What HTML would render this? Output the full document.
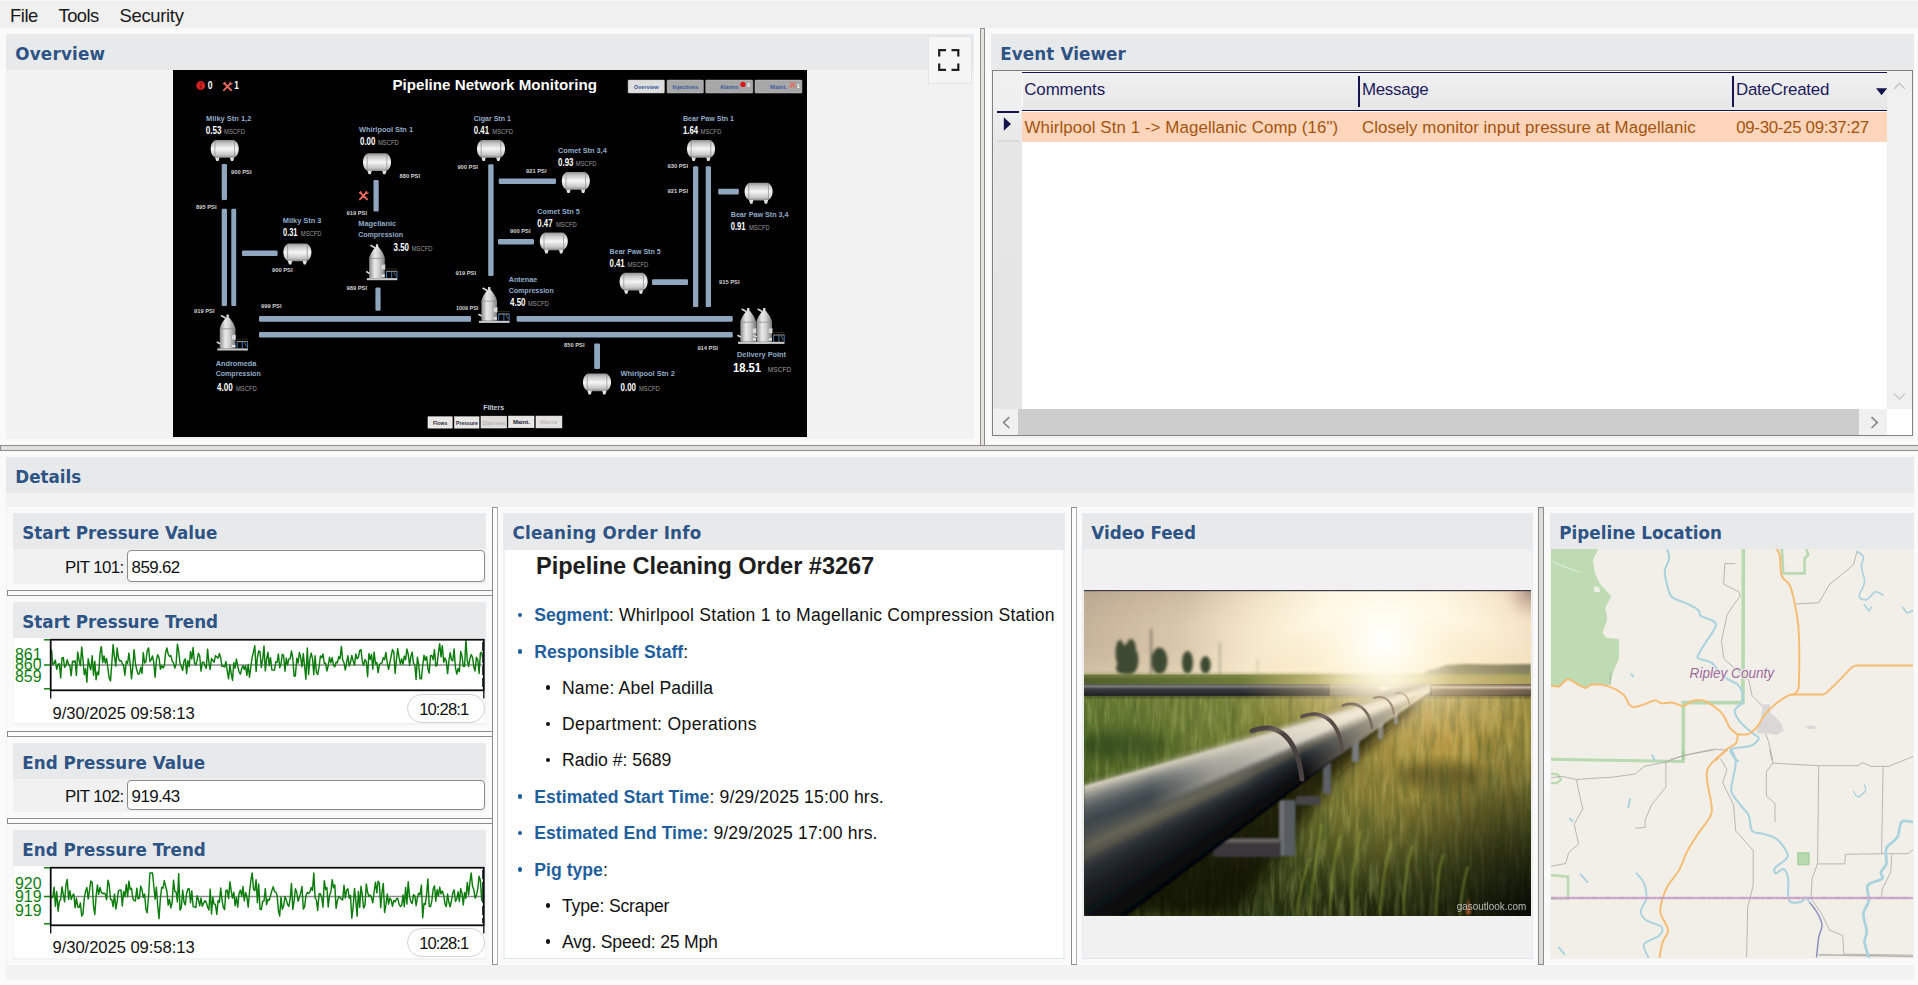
<!DOCTYPE html><html><head><meta charset='utf-8'><title>Pipeline Monitoring</title><style>
*{box-sizing:border-box;margin:0;padding:0}
html,body{width:1918px;height:985px;overflow:hidden;background:#fafafa}
body{position:relative;font-family:"Liberation Sans",sans-serif;color:#111;font-size:17px}
.abs{position:absolute}
.t{position:absolute;white-space:pre;line-height:1;transform-origin:0 0}
.hd{position:absolute;background:#e8e9eb}
.hd b,.ttl{position:absolute;white-space:pre;font-family:"DejaVu Sans","Liberation Sans",sans-serif;font-weight:bold;font-size:16.75px;color:#2d5485;line-height:1;letter-spacing:0}
.pb{position:absolute;background:#f2f2f2}
.vs{position:absolute;border-left:1px solid #8c8c8c;border-right:1px solid #8c8c8c;border-top:1px solid #8c8c8c}
.hs{position:absolute;border-top:1px solid #8c8c8c;border-bottom:1px solid #8c8c8c;border-left:1px solid #8c8c8c}
.inp{position:absolute;background:#fff;border:1px solid #8a8a8a;border-radius:4px}
.menu span{position:absolute;white-space:pre;font-size:18.2px;line-height:1;color:#1a1a1a}
.ui{font-size:16.9px;color:#111}
.doc{font-size:17.6px;color:#111}
.doc b{color:#1f5f9e;letter-spacing:0.02px}
</style></head><body>
<div class='abs' style='left:0;top:0;width:1918px;height:28px;background:#f0f0f0;border-top:1px solid #f8f8f8'></div>
<nav>
<span class='t ' style='left:10.00px;top:7.42px;font-size:18.4px;color:#1a1a1a;letter-spacing:-0.45px'>File</span>
<span class='t ' style='left:58.50px;top:7.42px;font-size:18.4px;color:#1a1a1a;letter-spacing:-0.55px'>Tools</span>
<span class='t ' style='left:119.50px;top:7.42px;font-size:18.4px;color:#1a1a1a;letter-spacing:-0.3px'>Security</span>
</nav>
<section>
<div class='pb' style='left:6px;top:34px;width:968px;height:405px'></div>
<div class='hd' style='left:6px;top:34px;width:968px;height:36px'></div>
<span class='t ttl' style='left:15.30px;top:46.23px;font-size:16.75px;letter-spacing:0.2px'>Overview</span>
<div class='abs' style='left:928px;top:36px;width:44px;height:48px;background:#f5f5f5;border:1px solid #e3e3e3'></div>
<svg class='abs' style='left:936px;top:47px' width='26' height='26' viewBox='936 47 26 26'><path d='M939.2 56.5v-6.3h6.8M951.5 50.2h6.8v6.3M958.3 63.5v6.3h-6.8M946 69.8h-6.8v-6.3' fill='none' stroke='#1e1e1e' stroke-width='2.2'/></svg>
<svg class='abs' style='left:173px;top:70px' width='634' height='367' viewBox='173 70 634 367' font-family='Liberation Sans, sans-serif'>
<defs>
<linearGradient id='tg' x1='0' y1='0' x2='0' y2='1'><stop offset='0' stop-color='#8e8e8e'/><stop offset='.18' stop-color='#c4c4c4'/><stop offset='.5' stop-color='#f6f6f6'/><stop offset='.82' stop-color='#c8c8c8'/><stop offset='1' stop-color='#8a8a8a'/></linearGradient>
<linearGradient id='cg' x1='0' y1='0' x2='1' y2='0'><stop offset='0' stop-color='#8a8a8a'/><stop offset='.35' stop-color='#e9e9e9'/><stop offset='.6' stop-color='#d2d2d2'/><stop offset='1' stop-color='#7c7c7c'/></linearGradient>
<g id='tank'><path d='M5.2 0H22.8C26.2 1.2 28 4.6 28 8.9S26.2 16.6 22.8 17.8H5.2C1.8 16.6 0 13.2 0 8.9S1.8 1.2 5.2 0Z' fill='url(#tg)'/><path d='M4.2 .5V17.3M23.8 .5V17.3' stroke='#8b8b8b' stroke-width='.7' fill='none'/><path d='M4.4 17.4H8.8L7.8 21H5.6ZM19.2 17.4H23.6L22.4 21H20.2Z' fill='#e2e2e2'/></g>
<g id='comp'><rect x='0' y='33.8' width='30.5' height='2.1' fill='#c9c9c9'/><path d='M2.4 33.8V14.2C2.8 10.6 5.4 6.6 8.6 2.8H11.8C15 6.6 17.6 10.6 18 14.2V33.8Z' fill='url(#cg)'/><path d='M2.4 14.2H18' stroke='#8a8a8a' stroke-width='.7'/><rect x='9.1' y='0' width='2.3' height='3.2' fill='#e4e4e4'/><path d='M3.6 .9L8.2 3.4' stroke='#d6d6d6' stroke-width='1.7'/><path d='M-.6 27.3L2.8 29.1' stroke='#d6d6d6' stroke-width='1.7'/><rect x='14.3' y='20.3' width='4' height='4.9' fill='#d9d9d9' stroke='#9a9a9a' stroke-width='.4'/><rect x='14.8' y='30.3' width='3.2' height='2.2' fill='#e8e8e8'/><path d='M19.4 24.6H30.4' stroke='#7a6a30' stroke-width='.6' stroke-dasharray='1.6 .8'/><path d='M19.4 27H30.4' stroke='#e4e4e4' stroke-width='.7'/><path d='M19.7 27V33.8M24.9 27V33.8M30.2 27V33.8' stroke='#3f86c8' stroke-width='.9'/><path d='M27 28L29.4 32' stroke='#cfd8e2' stroke-width='.5'/></g>
<g id='wr'><path d='M1.5 1.8L8.4 8.6M8 1.6L1.2 8.6' stroke='#e8685c' stroke-width='1.9' stroke-linecap='round'/><circle cx='8.2' cy='1.6' r='1.6' fill='#e8685c'/><circle cx='9' cy='.7' r='.9' fill='#000'/><circle cx='1.6' cy='1.6' r='1.4' fill='#e8685c'/><circle cx='.8' cy='.7' r='.8' fill='#000'/></g>
<g id='wr2'><path d='M1.5 1.8L8.4 8.6M8 1.6L1.2 8.6' stroke='#e8685c' stroke-width='2.1' stroke-linecap='round'/></g>
</defs>
<rect x='173' y='70' width='634' height='367' fill='#000'/>
<rect x='221.7' y='164' width='5.3' height='36.0' rx='1.3' fill='#8ea7bf'/>
<rect x='221.7' y='208.7' width='5.3' height='97.3' rx='1.3' fill='#8ea7bf'/>
<rect x='231.3' y='208.7' width='4.9' height='97.3' rx='1.3' fill='#8ea7bf'/>
<rect x='242' y='250.5' width='35.6' height='5.5' rx='1.3' fill='#8ea7bf'/>
<rect x='373.5' y='180' width='5.2' height='31.6' rx='1.3' fill='#8ea7bf'/>
<rect x='375.4' y='287.6' width='5.2' height='23.2' rx='1.3' fill='#8ea7bf'/>
<rect x='488.2' y='164.3' width='5.4' height='111.7' rx='1.3' fill='#8ea7bf'/>
<rect x='498.7' y='178.4' width='57.3' height='5.6' rx='1.3' fill='#8ea7bf'/>
<rect x='498' y='239' width='36.0' height='5.4' rx='1.3' fill='#8ea7bf'/>
<rect x='693' y='166.3' width='5.3' height='140.7' rx='1.3' fill='#8ea7bf'/>
<rect x='705.7' y='166.3' width='5.3' height='140.7' rx='1.3' fill='#8ea7bf'/>
<rect x='718.2' y='188.8' width='20.6' height='5.8' rx='1.3' fill='#8ea7bf'/>
<rect x='652' y='279.3' width='36.0' height='5.7' rx='1.3' fill='#8ea7bf'/>
<rect x='259' y='316' width='212.0' height='5.8' rx='1.3' fill='#8ea7bf'/>
<rect x='516.6' y='316' width='216.1' height='5.8' rx='1.3' fill='#8ea7bf'/>
<rect x='259' y='332' width='473.7' height='5.5' rx='1.3' fill='#8ea7bf'/>
<rect x='594.2' y='343.5' width='5.8' height='25.5' rx='1.3' fill='#8ea7bf'/>
<use href='#tank' x='210.7' y='140'/>
<use href='#tank' x='363' y='153.3'/>
<use href='#tank' x='477' y='140'/>
<use href='#tank' x='561.8' y='172'/>
<use href='#tank' x='687' y='140'/>
<use href='#tank' x='283.4' y='243.4'/>
<use href='#tank' x='539.8' y='232.4'/>
<use href='#tank' x='744.6' y='182.7'/>
<use href='#tank' x='619.6' y='272.8'/>
<use href='#tank' x='583' y='373.4'/>
<use href='#comp' x='366.8' y='244.3'/>
<use href='#comp' x='217.4' y='314.6'/>
<use href='#comp' x='479' y='287'/>
<use href='#comp' x='738' y='308'/>
<use href='#comp' x='754' y='308'/>
<circle cx='200.7' cy='85.6' r='4.5' fill='#cb2222'/><rect x='200.1' y='84.8' width='1.3' height='3.7' fill='#8e1010'/><rect x='200.1' y='82.6' width='1.3' height='1.3' fill='#8e1010'/>
<text x='207.7' y='89.2' font-size='10.6' font-weight='bold' fill='#fff' textLength='4.8' lengthAdjust='spacingAndGlyphs'>0</text>
<use href='#wr' x='222.8' y='81.6'/>
<text x='234.2' y='89.2' font-size='10.6' font-weight='bold' fill='#fff' textLength='4.6' lengthAdjust='spacingAndGlyphs'>1</text>
<text x='392.4' y='90.1' font-size='14.8' font-weight='bold' fill='#fff' textLength='204.6' lengthAdjust='spacingAndGlyphs'>Pipeline Network Monitoring</text>
<rect x='628.1' y='80.1' width='36.3' height='12.9' rx='.8' fill='#dedede' stroke='#c9c9c9' stroke-width='.5'/>
<text x='633.9' y='89' font-size='6.2' font-weight='bold' fill='#3b5a9d' textLength='24.8' lengthAdjust='spacingAndGlyphs'>Overview</text>
<rect x='667.1' y='80.1' width='36.3' height='12.9' rx='.8' fill='#a9a9a9' stroke='#c9c9c9' stroke-width='.5'/>
<text x='672.5' y='89' font-size='6.2' font-weight='bold' fill='#3b5a9d' textLength='25.8' lengthAdjust='spacingAndGlyphs'>Injections</text>
<rect x='705.7' y='80.1' width='47.1' height='12.9' rx='.8' fill='#a7a7a7' stroke='#c9c9c9' stroke-width='.5'/>
<text x='720.1' y='89' font-size='6.2' font-weight='bold' fill='#3b5a9d' textLength='18.3' lengthAdjust='spacingAndGlyphs'>Alarms</text>
<rect x='755' y='80.1' width='46.9' height='12.9' rx='.8' fill='#a7a7a7' stroke='#c9c9c9' stroke-width='.5'/>
<text x='770.1' y='89' font-size='6.2' font-weight='bold' fill='#3b5a9d' textLength='16.9' lengthAdjust='spacingAndGlyphs'>Maint.</text>
<circle cx='743' cy='84.4' r='2.6' fill='#e01515'/><text x='747' y='86.5' font-size='5.5' fill='#fff' font-weight='bold'>0</text>
<use href='#wr2' transform='translate(789.5 81.6) scale(.66)'/><text x='796.8' y='87.5' font-size='5.5' fill='#fff' font-weight='bold'>1</text>
<text x='206' y='121' font-size='8' font-weight='bold' fill='#93acc8' textLength='45.3' lengthAdjust='spacingAndGlyphs'>Milky Stn 1,2</text>
<text x='359' y='132' font-size='8' font-weight='bold' fill='#93acc8' textLength='54' lengthAdjust='spacingAndGlyphs'>Whirlpool Stn 1</text>
<text x='473.8' y='121' font-size='8' font-weight='bold' fill='#93acc8' textLength='37' lengthAdjust='spacingAndGlyphs'>Cigar Stn 1</text>
<text x='558' y='152.8' font-size='8' font-weight='bold' fill='#93acc8' textLength='48.7' lengthAdjust='spacingAndGlyphs'>Comet Stn 3,4</text>
<text x='683' y='121' font-size='8' font-weight='bold' fill='#93acc8' textLength='51' lengthAdjust='spacingAndGlyphs'>Bear Paw Stn 1</text>
<text x='282.8' y='223' font-size='8' font-weight='bold' fill='#93acc8' textLength='38.6' lengthAdjust='spacingAndGlyphs'>Milky Stn 3</text>
<text x='358.2' y='225.7' font-size='8' font-weight='bold' fill='#93acc8' textLength='38' lengthAdjust='spacingAndGlyphs'>Magellanic</text>
<text x='358.2' y='236.7' font-size='8' font-weight='bold' fill='#93acc8' textLength='44.8' lengthAdjust='spacingAndGlyphs'>Compression</text>
<text x='537.3' y='214' font-size='8' font-weight='bold' fill='#93acc8' textLength='42.4' lengthAdjust='spacingAndGlyphs'>Comet Stn 5</text>
<text x='730.7' y='216.8' font-size='8' font-weight='bold' fill='#93acc8' textLength='57.9' lengthAdjust='spacingAndGlyphs'>Bear Paw Stn 3,4</text>
<text x='609.6' y='254' font-size='8' font-weight='bold' fill='#93acc8' textLength='51.1' lengthAdjust='spacingAndGlyphs'>Bear Paw Stn 5</text>
<text x='508.7' y='281.8' font-size='8' font-weight='bold' fill='#93acc8' textLength='28.6' lengthAdjust='spacingAndGlyphs'>Antenae</text>
<text x='508.7' y='292.8' font-size='8' font-weight='bold' fill='#93acc8' textLength='45' lengthAdjust='spacingAndGlyphs'>Compression</text>
<text x='215.7' y='366' font-size='8' font-weight='bold' fill='#93acc8' textLength='40.7' lengthAdjust='spacingAndGlyphs'>Andromeda</text>
<text x='215.7' y='376.3' font-size='8' font-weight='bold' fill='#93acc8' textLength='45' lengthAdjust='spacingAndGlyphs'>Compression</text>
<text x='620.6' y='375.8' font-size='8' font-weight='bold' fill='#93acc8' textLength='54.2' lengthAdjust='spacingAndGlyphs'>Whirlpool Stn 2</text>
<text x='737' y='357' font-size='8' font-weight='bold' fill='#93acc8' textLength='49' lengthAdjust='spacingAndGlyphs'>Delivery Point</text>
<text x='483.2' y='409.9' font-size='8' font-weight='bold' fill='#c3d0de' textLength='20.8' lengthAdjust='spacingAndGlyphs'>Filters</text>
<text x='205.8' y='134' font-size='10' font-weight='bold' fill='#fff' textLength='15.8' lengthAdjust='spacingAndGlyphs'>0.53</text>
<text x='360' y='145' font-size='10' font-weight='bold' fill='#fff' textLength='15.4' lengthAdjust='spacingAndGlyphs'>0.00</text>
<text x='473.8' y='134' font-size='10' font-weight='bold' fill='#fff' textLength='15.2' lengthAdjust='spacingAndGlyphs'>0.41</text>
<text x='558' y='166' font-size='10' font-weight='bold' fill='#fff' textLength='15.5' lengthAdjust='spacingAndGlyphs'>0.93</text>
<text x='683' y='134' font-size='10' font-weight='bold' fill='#fff' textLength='15' lengthAdjust='spacingAndGlyphs'>1.64</text>
<text x='283' y='236.3' font-size='10' font-weight='bold' fill='#fff' textLength='14.5' lengthAdjust='spacingAndGlyphs'>0.31</text>
<text x='393.6' y='250.7' font-size='10' font-weight='bold' fill='#fff' textLength='15.4' lengthAdjust='spacingAndGlyphs'>3.50</text>
<text x='537.3' y='227' font-size='10' font-weight='bold' fill='#fff' textLength='15.2' lengthAdjust='spacingAndGlyphs'>0.47</text>
<text x='730.7' y='230' font-size='10' font-weight='bold' fill='#fff' textLength='14.8' lengthAdjust='spacingAndGlyphs'>0.91</text>
<text x='609.6' y='267' font-size='10' font-weight='bold' fill='#fff' textLength='15' lengthAdjust='spacingAndGlyphs'>0.41</text>
<text x='510' y='306' font-size='10' font-weight='bold' fill='#fff' textLength='15.5' lengthAdjust='spacingAndGlyphs'>4.50</text>
<text x='217' y='390.9' font-size='10' font-weight='bold' fill='#fff' textLength='15.7' lengthAdjust='spacingAndGlyphs'>4.00</text>
<text x='620.6' y='390.9' font-size='10' font-weight='bold' fill='#fff' textLength='15.4' lengthAdjust='spacingAndGlyphs'>0.00</text>
<text x='733' y='372' font-size='12.8' font-weight='bold' fill='#fff' textLength='28' lengthAdjust='spacingAndGlyphs'>18.51</text>
<text x='224.1' y='134' font-size='6.8' fill='#9b9b9b' textLength='20.8' lengthAdjust='spacingAndGlyphs'>MSCFD</text>
<text x='378' y='145' font-size='6.8' fill='#9b9b9b' textLength='20.8' lengthAdjust='spacingAndGlyphs'>MSCFD</text>
<text x='492.3' y='134' font-size='6.8' fill='#9b9b9b' textLength='20.8' lengthAdjust='spacingAndGlyphs'>MSCFD</text>
<text x='575.8' y='166' font-size='6.8' fill='#9b9b9b' textLength='20.8' lengthAdjust='spacingAndGlyphs'>MSCFD</text>
<text x='700.6' y='134' font-size='6.8' fill='#9b9b9b' textLength='20.8' lengthAdjust='spacingAndGlyphs'>MSCFD</text>
<text x='300.8' y='236.3' font-size='6.8' fill='#9b9b9b' textLength='20.8' lengthAdjust='spacingAndGlyphs'>MSCFD</text>
<text x='411.7' y='250.7' font-size='6.8' fill='#9b9b9b' textLength='20.8' lengthAdjust='spacingAndGlyphs'>MSCFD</text>
<text x='556' y='227' font-size='6.8' fill='#9b9b9b' textLength='20.8' lengthAdjust='spacingAndGlyphs'>MSCFD</text>
<text x='748.9' y='230' font-size='6.8' fill='#9b9b9b' textLength='20.8' lengthAdjust='spacingAndGlyphs'>MSCFD</text>
<text x='627.5' y='267' font-size='6.8' fill='#9b9b9b' textLength='20.8' lengthAdjust='spacingAndGlyphs'>MSCFD</text>
<text x='528' y='306' font-size='6.8' fill='#9b9b9b' textLength='20.8' lengthAdjust='spacingAndGlyphs'>MSCFD</text>
<text x='236' y='390.9' font-size='6.8' fill='#9b9b9b' textLength='20.8' lengthAdjust='spacingAndGlyphs'>MSCFD</text>
<text x='639' y='390.9' font-size='6.8' fill='#9b9b9b' textLength='20.8' lengthAdjust='spacingAndGlyphs'>MSCFD</text>
<text x='767.8' y='372' font-size='8' fill='#9b9b9b' textLength='23.5' lengthAdjust='spacingAndGlyphs'>MSCFD</text>
<text x='231' y='173.9' font-size='5.3' font-weight='bold' fill='#d4d4d4' textLength='20.5' lengthAdjust='spacingAndGlyphs'>900 PSI</text>
<text x='196' y='208.9' font-size='5.3' font-weight='bold' fill='#d4d4d4' textLength='20.5' lengthAdjust='spacingAndGlyphs'>895 PSI</text>
<text x='399.5' y='177.9' font-size='5.3' font-weight='bold' fill='#d4d4d4' textLength='20.5' lengthAdjust='spacingAndGlyphs'>880 PSI</text>
<text x='346.5' y='214.9' font-size='5.3' font-weight='bold' fill='#d4d4d4' textLength='20.5' lengthAdjust='spacingAndGlyphs'>919 PSI</text>
<text x='457.4' y='168.9' font-size='5.3' font-weight='bold' fill='#d4d4d4' textLength='20.5' lengthAdjust='spacingAndGlyphs'>900 PSI</text>
<text x='526' y='172.9' font-size='5.3' font-weight='bold' fill='#d4d4d4' textLength='20.5' lengthAdjust='spacingAndGlyphs'>921 PSI</text>
<text x='510' y='232.9' font-size='5.3' font-weight='bold' fill='#d4d4d4' textLength='20.5' lengthAdjust='spacingAndGlyphs'>900 PSI</text>
<text x='667.5' y='168.2' font-size='5.3' font-weight='bold' fill='#d4d4d4' textLength='20.5' lengthAdjust='spacingAndGlyphs'>930 PSI</text>
<text x='667.5' y='192.9' font-size='5.3' font-weight='bold' fill='#d4d4d4' textLength='20.5' lengthAdjust='spacingAndGlyphs'>921 PSI</text>
<text x='272' y='271.9' font-size='5.3' font-weight='bold' fill='#d4d4d4' textLength='20.5' lengthAdjust='spacingAndGlyphs'>900 PSI</text>
<text x='346.5' y='289.9' font-size='5.3' font-weight='bold' fill='#d4d4d4' textLength='20.5' lengthAdjust='spacingAndGlyphs'>989 PSI</text>
<text x='194' y='312.9' font-size='5.3' font-weight='bold' fill='#d4d4d4' textLength='20.5' lengthAdjust='spacingAndGlyphs'>919 PSI</text>
<text x='261' y='307.9' font-size='5.3' font-weight='bold' fill='#d4d4d4' textLength='20.5' lengthAdjust='spacingAndGlyphs'>999 PSI</text>
<text x='455.5' y='274.9' font-size='5.3' font-weight='bold' fill='#d4d4d4' textLength='20.5' lengthAdjust='spacingAndGlyphs'>919 PSI</text>
<text x='456' y='309.9' font-size='5.3' font-weight='bold' fill='#d4d4d4' textLength='22.3' lengthAdjust='spacingAndGlyphs'>1009 PSI</text>
<text x='719' y='283.7' font-size='5.3' font-weight='bold' fill='#d4d4d4' textLength='20.5' lengthAdjust='spacingAndGlyphs'>915 PSI</text>
<text x='564' y='346.9' font-size='5.3' font-weight='bold' fill='#d4d4d4' textLength='20.5' lengthAdjust='spacingAndGlyphs'>850 PSI</text>
<text x='697.4' y='350.3' font-size='5.3' font-weight='bold' fill='#d4d4d4' textLength='20.5' lengthAdjust='spacingAndGlyphs'>914 PSI</text>
<use href='#wr' x='358.7' y='190.8'/>
<rect x='428' y='416.8' width='24.2' height='11.3' fill='#e9e7e3' stroke='#fafafa' stroke-width='.6'/>
<text x='432.9' y='425.1' font-size='6' font-weight='bold' fill='#2a2a33' textLength='14.5' lengthAdjust='spacingAndGlyphs'>Flows</text>
<rect x='454.6' y='416.8' width='24.4' height='11.3' fill='#e9e7e3' stroke='#fafafa' stroke-width='.6'/>
<text x='456' y='425.1' font-size='6' font-weight='bold' fill='#2a2a44' textLength='21.9' lengthAdjust='spacingAndGlyphs'>Pressure</text>
<rect x='481' y='416.2' width='25.6' height='11.8' fill='#dcdad6' stroke='#fafafa' stroke-width='.6'/>
<text x='482.2' y='425.1' font-size='6' font-weight='normal' fill='#aaa9b0' textLength='23.4' lengthAdjust='spacingAndGlyphs'>Diameter</text>
<rect x='508.6' y='416.1' width='25.4' height='11.6' fill='#e9e7e3' stroke='#fafafa' stroke-width='.6'/>
<text x='512.9' y='424' font-size='6' font-weight='bold' fill='#1e2238' textLength='17' lengthAdjust='spacingAndGlyphs'>Maint.</text>
<rect x='536' y='416.1' width='25.9' height='11.8' fill='#e4e2de' stroke='#fafafa' stroke-width='.6'/>
<text x='540' y='424.2' font-size='6' font-weight='normal' fill='#a9a8ae' textLength='17.6' lengthAdjust='spacingAndGlyphs'>Alarms</text>
</svg>
</section>
<div class='vs' style='left:980px;top:28px;width:5px;height:417px;background:#e6e4df'></div>
<section>
<div class='pb' style='left:991px;top:34px;width:923px;height:405px'></div>
<div class='hd' style='left:991px;top:34px;width:923px;height:36px'></div>
<span class='t ttl' style='left:1000.30px;top:46.23px;font-size:16.75px;letter-spacing:0.1px'>Event Viewer</span>
<div class='abs' style='left:992px;top:70px;width:921px;height:366px;background:#fff;border:1px solid #828282'></div>
<div class='abs' style='left:993px;top:71px;width:29px;height:338px;background:linear-gradient(#f0f0f0 0,#efefef 40px,#e6e6e6 75px,#e5e5e5 100%)'></div>
<div class='abs' style='left:1022px;top:72px;width:865px;height:39px;background:linear-gradient(#f1f1f1,#e6e6e6);border-top:1.5px solid #14144f;border-bottom:1.5px solid #14144f'></div>
<div class='abs' style='left:1022px;top:76px;width:1px;height:31px;background:#fbfbfb'></div>
<div class='abs' style='left:1358px;top:76px;width:2px;height:31px;background:#14144f'></div>
<div class='abs' style='left:1732px;top:76px;width:1.5px;height:31px;background:#14144f'></div>
<span class='t ' style='left:1024.30px;top:82.29px;font-size:16.9px;color:#1b1b5c;letter-spacing:-0.12px'>Comments</span>
<span class='t ' style='left:1362.00px;top:82.29px;font-size:16.9px;color:#1b1b5c;letter-spacing:-0.3px'>Message</span>
<span class='t ' style='left:1736.00px;top:82.29px;font-size:16.9px;color:#1b1b5c;letter-spacing:-0.24px'>DateCreated</span>
<svg class='abs' style='left:1874px;top:86px' width='14' height='12' viewBox='1874 86 14 12'><path d='M1876 88.3h11.2l-5.6 6.9z' fill='#14144f'/></svg>
<div class='abs' style='left:1022px;top:111.5px;width:865px;height:30.5px;background:#fdd5ba'></div>
<span class='t ' style='left:1024.40px;top:120.39px;font-size:16.9px;color:#a4540f;letter-spacing:0.08px'>Whirlpool Stn 1 -&gt; Magellanic Comp (16")</span>
<span class='t ' style='left:1362.00px;top:120.39px;font-size:16.9px;color:#a4540f;letter-spacing:0.03px'>Closely monitor input pressure at Magellanic</span>
<span class='t ' style='left:1736.20px;top:120.39px;font-size:16.9px;color:#a4540f;letter-spacing:-0.32px'>09-30-25 09:37:27</span>
<div class='abs' style='left:997px;top:110.5px;width:22px;height:2.5px;background:#14144f'></div>
<div class='abs' style='left:997px;top:140px;width:22px;height:1.8px;background:#d9d9d9'></div>
<svg class='abs' style='left:1002px;top:116px' width='12' height='16' viewBox='1002 116 12 16'><path d='M1003.8 117.3v13.4l7.2-6.7z' fill='#14144f'/></svg>
<div class='abs' style='left:1887px;top:71px;width:25px;height:338px;background:#f0f0f0'></div>
<svg class='abs' style='left:1887px;top:71px' width='25' height='338' viewBox='1887 71 25 338'><path d='M1894 89l5.5-5.5 5.5 5.5' fill='none' stroke='#c9c9c9' stroke-width='1.6'/><path d='M1894 393.5l5.5 5.5 5.5-5.5' fill='none' stroke='#cfcfcf' stroke-width='1.6'/></svg>
<div class='abs' style='left:993px;top:409px;width:894px;height:26px;background:#f0f0f0'></div>
<div class='abs' style='left:1018px;top:409px;width:841px;height:26px;background:#cdcdcd'></div>
<svg class='abs' style='left:993px;top:409px' width='894' height='26' viewBox='993 409 894 26'><path d='M1009.3 417.2l-5.8 5.4 5.8 5.4' fill='none' stroke='#858585' stroke-width='1.6'/><path d='M1871.5 417.2l5.8 5.4-5.8 5.4' fill='none' stroke='#858585' stroke-width='1.6'/></svg>
</section>
<div class='hs' style='left:0;top:445px;width:1918px;height:6px;background:#e0dfdb'></div>
<section>
<div class='pb' style='left:6px;top:457px;width:1908px;height:523px'></div>
<div class='hd' style='left:6px;top:457px;width:1908px;height:36px'></div>
<span class='t ttl' style='left:15.30px;top:469.23px;font-size:16.75px;'>Details</span>
<div class='abs' style='left:7px;top:507px;width:1907px;height:458px;background:#fafafa'></div>
<div class='pb' style='left:13px;top:513px;width:473px;height:71px;background:#f1f1f1'></div>
<div class='hd' style='left:13px;top:513px;width:473px;height:36px'></div>
<span class='t ttl' style='left:22.30px;top:525.13px;font-size:16.75px;'>Start Pressure Value</span>
<span class='t ' style='left:65.00px;top:560.19px;font-size:16.9px;letter-spacing:-0.62px'>PIT 101:</span>
<div class='inp' style='left:127px;top:550px;width:358px;height:32px'></div>
<span class='t ' style='left:131.60px;top:560.19px;font-size:16.9px;letter-spacing:-0.6px'>859.62</span>
<div class='hs' style='left:7px;top:590px;width:485px;height:6px;background:#fbfbfb'></div>
<div class='pb' style='left:13px;top:602px;width:473px;height:123px'></div>
<div class='abs' style='left:14px;top:638px;width:471px;height:85px;background:#fff'></div>
<div class='hd' style='left:13px;top:602px;width:473px;height:36px'></div>
<span class='t ttl' style='left:22.30px;top:614.13px;font-size:16.75px;'>Start Pressure Trend</span>
<svg class='abs' style='left:13px;top:637px' width='475' height='88' viewBox='13 637 475 88'>
<line x1='50' x2='484.5' y1='665.0' y2='665.0' stroke='#8a8a8a' stroke-width='1.6'/>
<polyline points='51.5,649.6 52.8,664.5 54.1,663.4 55.4,660.1 56.7,669.3 58.1,664.6 59.4,663.7 60.7,677.9 62.0,657.9 63.3,657.4 64.6,667.3 65.9,665.6 67.2,659.7 68.6,664.8 69.9,665.6 71.2,675.8 72.5,661.2 73.8,661.9 75.1,660.8 76.4,675.4 77.7,652.1 79.0,659.8 80.4,665.8 81.7,647.1 83.0,660.4 84.3,674.6 85.6,668.8 86.9,682.2 88.2,658.6 89.5,665.7 90.8,669.8 92.2,655.7 93.5,675.2 94.8,661.2 96.1,679.7 97.4,671.9 98.7,674.8 100.0,653.4 101.3,646.6 102.7,662.5 104.0,656.0 105.3,663.1 106.6,658.4 107.9,668.3 109.2,678.1 110.5,680.9 111.8,663.4 113.1,644.6 114.5,657.1 115.8,666.1 117.1,647.9 118.4,658.0 119.7,661.1 121.0,660.5 122.3,663.5 123.6,665.6 124.9,675.2 126.3,661.2 127.6,663.3 128.9,653.1 130.2,664.0 131.5,678.8 132.8,666.8 134.1,649.6 135.4,663.3 136.8,670.2 138.1,674.1 139.4,673.7 140.7,667.4 142.0,673.4 143.3,652.6 144.6,663.0 145.9,661.9 147.2,650.7 148.6,647.9 149.9,661.5 151.2,659.7 152.5,656.0 153.8,662.9 155.1,677.3 156.4,660.2 157.7,654.8 159.0,657.6 160.4,669.2 161.7,665.5 163.0,668.0 164.3,666.1 165.6,652.6 166.9,648.0 168.2,654.1 169.5,656.3 170.9,655.7 172.2,661.3 173.5,662.9 174.8,668.1 176.1,664.1 177.4,644.2 178.7,651.7 180.0,663.1 181.3,666.5 182.7,670.4 184.0,660.9 185.3,658.9 186.6,673.6 187.9,660.6 189.2,666.7 190.5,651.5 191.8,658.9 193.1,647.5 194.5,663.1 195.8,664.9 197.1,660.4 198.4,653.2 199.7,655.8 201.0,671.1 202.3,662.5 203.6,662.1 205.0,665.8 206.3,668.3 207.6,649.1 208.9,662.8 210.2,669.3 211.5,658.4 212.8,660.4 214.1,662.4 215.4,655.8 216.8,656.9 218.1,658.1 219.4,653.4 220.7,658.0 222.0,666.4 223.3,665.9 224.6,667.1 225.9,661.4 227.2,670.8 228.6,678.9 229.9,664.7 231.2,673.6 232.5,680.4 233.8,662.6 235.1,668.0 236.4,659.1 237.7,665.8 239.1,672.0 240.4,674.2 241.7,668.6 243.0,665.5 244.3,669.4 245.6,665.7 246.9,675.3 248.2,664.5 249.5,677.2 250.9,666.5 252.2,657.1 253.5,651.9 254.8,645.8 256.1,671.4 257.4,657.5 258.7,651.0 260.0,651.6 261.3,667.4 262.7,659.5 264.0,646.0 265.3,670.9 266.6,659.7 267.9,652.2 269.2,665.6 270.5,657.7 271.8,669.7 273.2,670.0 274.5,670.1 275.8,661.8 277.1,662.4 278.4,654.0 279.7,667.8 281.0,664.0 282.3,654.2 283.6,655.5 285.0,671.3 286.3,658.1 287.6,664.8 288.9,659.0 290.2,658.6 291.5,650.9 292.8,658.5 294.1,676.2 295.4,675.7 296.8,658.3 298.1,663.0 299.4,652.4 300.7,657.4 302.0,666.8 303.3,653.6 304.6,666.5 305.9,679.3 307.3,648.0 308.6,674.5 309.9,658.8 311.2,653.1 312.5,658.5 313.8,674.7 315.1,655.7 316.4,672.1 317.7,674.5 319.1,666.9 320.4,656.0 321.7,657.8 323.0,653.9 324.3,663.5 325.6,663.1 326.9,671.0 328.2,665.8 329.5,657.3 330.9,662.9 332.2,657.6 333.5,665.2 334.8,666.9 336.1,662.0 337.4,662.9 338.7,656.6 340.0,658.8 341.4,646.4 342.7,660.0 344.0,662.8 345.3,670.0 346.6,662.7 347.9,655.8 349.2,666.1 350.5,662.5 351.8,655.4 353.2,661.0 354.5,665.3 355.8,653.9 357.1,658.8 358.4,657.3 359.7,650.6 361.0,649.5 362.3,661.5 363.6,665.4 365.0,659.5 366.3,661.7 367.6,676.7 368.9,653.6 370.2,659.3 371.5,654.5 372.8,669.3 374.1,652.0 375.5,663.9 376.8,662.4 378.1,672.7 379.4,664.6 380.7,663.5 382.0,662.9 383.3,657.6 384.6,659.7 385.9,652.5 387.3,663.0 388.6,669.4 389.9,662.6 391.2,656.0 392.5,649.5 393.8,651.8 395.1,673.5 396.4,660.1 397.7,648.6 399.1,657.7 400.4,664.3 401.7,658.8 403.0,664.4 404.3,656.1 405.6,659.8 406.9,649.0 408.2,654.2 409.6,665.3 410.9,656.5 412.2,652.1 413.5,663.5 414.8,664.7 416.1,679.5 417.4,657.1 418.7,664.7 420.0,678.8 421.4,678.7 422.7,666.0 424.0,655.3 425.3,660.2 426.6,656.5 427.9,668.7 429.2,673.1 430.5,655.7 431.8,655.4 433.2,659.7 434.5,649.7 435.8,666.1 437.1,665.0 438.4,652.8 439.7,643.7 441.0,656.9 442.3,645.8 443.7,662.4 445.0,658.0 446.3,661.3 447.6,673.6 448.9,660.8 450.2,652.7 451.5,660.0 452.8,660.8 454.1,648.9 455.5,668.2 456.8,674.1 458.1,668.4 459.4,671.7 460.7,651.4 462.0,655.9 463.3,666.4 464.6,666.5 465.9,640.1 467.3,660.7 468.6,666.5 469.9,658.9 471.2,654.6 472.5,657.2 473.8,667.0 475.1,671.0 476.4,657.3 477.8,659.9 479.1,673.5 480.4,653.1 481.7,652.2 483.0,660.4' fill='none' stroke='#0c7d0c' stroke-width='1.45' stroke-linejoin='round'/>
<line x1='482.9' x2='482.9' y1='642' y2='688' stroke='#2f4a4c' stroke-width='1.8' stroke-dasharray='9 3'/>
<rect x='50.7' y='639.7' width='433.1' height='50.6' fill='none' stroke='#0c0c0c' stroke-width='1.8'/>
<path d='M50.7 691v7.5M483.8 691v7.5' stroke='#0c0c0c' stroke-width='1.3'/>
<line x1='44' x2='50' y1='639.8' y2='639.8' stroke='#0f800f' stroke-width='1.5'/>
<line x1='44' x2='50' y1='665.0' y2='665.0' stroke='#0f800f' stroke-width='1.5'/>
<line x1='44' x2='50' y1='688.8' y2='688.8' stroke='#0f800f' stroke-width='1.5'/>
<text x='41.6' y='659.6' text-anchor='end' font-family='Liberation Sans, sans-serif' font-size='15.6' fill='#0f800f' textLength='26.6' lengthAdjust='spacingAndGlyphs'>861</text>
<text x='41.6' y='670.3' text-anchor='end' font-family='Liberation Sans, sans-serif' font-size='15.6' fill='#0f800f' textLength='26.6' lengthAdjust='spacingAndGlyphs'>860</text>
<text x='41.6' y='682.3' text-anchor='end' font-family='Liberation Sans, sans-serif' font-size='15.6' fill='#0f800f' textLength='26.6' lengthAdjust='spacingAndGlyphs'>859</text>
</svg>
<span class='t ' style='left:52.50px;top:705.75px;font-size:16.6px;letter-spacing:-0.05px'>9/30/2025 09:58:13</span>
<div class='abs' style='left:407px;top:693.5px;width:77.5px;height:29px;border:1px solid #d2d2d2;border-radius:15px;background:#fff'></div>
<span class='t ' style='left:419.20px;top:702.45px;font-size:16.6px;letter-spacing:-0.9px'>10:28:1</span>
<div class='hs' style='left:7px;top:731px;width:485px;height:6px;background:#fbfbfb'></div>
<div class='pb' style='left:13px;top:743px;width:473px;height:69px;background:#f1f1f1'></div>
<div class='hd' style='left:13px;top:743px;width:473px;height:36px'></div>
<span class='t ttl' style='left:22.30px;top:754.93px;font-size:16.75px;'>End Pressure Value</span>
<span class='t ' style='left:65.00px;top:789.19px;font-size:16.9px;letter-spacing:-0.62px'>PIT 102:</span>
<div class='inp' style='left:127px;top:780px;width:358px;height:30px'></div>
<span class='t ' style='left:131.60px;top:789.19px;font-size:16.9px;letter-spacing:-0.6px'>919.43</span>
<div class='hs' style='left:7px;top:818px;width:485px;height:6px;background:#fbfbfb'></div>
<div class='pb' style='left:13px;top:830px;width:473px;height:130px'></div>
<div class='abs' style='left:14px;top:866px;width:471px;height:92px;background:#fff'></div>
<div class='hd' style='left:13px;top:830px;width:473px;height:36px'></div>
<span class='t ttl' style='left:22.30px;top:841.73px;font-size:16.75px;'>End Pressure Trend</span>
<svg class='abs' style='left:13px;top:865px' width='475' height='95' viewBox='13 865 475 95'>
<line x1='50' x2='484.5' y1='896.5' y2='896.5' stroke='#8a8a8a' stroke-width='1.6'/>
<polyline points='51.5,897.0 52.8,897.6 54.1,887.2 55.4,906.2 56.7,891.6 58.1,911.2 59.4,901.3 60.7,899.6 62.0,886.8 63.3,894.7 64.6,901.8 65.9,885.0 67.2,879.4 68.6,899.4 69.9,890.7 71.2,899.5 72.5,895.6 73.8,894.0 75.1,907.7 76.4,898.1 77.7,906.6 79.0,907.6 80.4,902.9 81.7,916.0 83.0,913.9 84.3,897.9 85.6,890.9 86.9,887.6 88.2,899.0 89.5,890.6 90.8,881.0 92.2,882.6 93.5,906.4 94.8,914.5 96.1,896.4 97.4,885.1 98.7,894.4 100.0,887.4 101.3,892.4 102.7,893.6 104.0,893.2 105.3,893.8 106.6,899.8 107.9,880.3 109.2,884.8 110.5,899.3 111.8,899.7 113.1,906.7 114.5,894.1 115.8,909.1 117.1,902.1 118.4,890.8 119.7,890.2 121.0,890.0 122.3,906.0 123.6,891.4 124.9,896.7 126.3,884.4 127.6,896.6 128.9,881.1 130.2,889.6 131.5,888.3 132.8,898.5 134.1,900.6 135.4,900.9 136.8,888.2 138.1,898.9 139.4,898.1 140.7,886.1 142.0,889.7 143.3,897.5 144.6,894.1 145.9,908.9 147.2,912.8 148.6,895.8 149.9,873.0 151.2,873.0 152.5,873.0 153.8,885.7 155.1,899.2 156.4,887.2 157.7,905.6 159.0,918.8 160.4,898.2 161.7,887.4 163.0,888.2 164.3,880.6 165.6,886.3 166.9,891.3 168.2,905.1 169.5,899.4 170.9,907.9 172.2,902.2 173.5,880.2 174.8,891.3 176.1,892.0 177.4,902.0 178.7,873.7 180.0,910.1 181.3,907.7 182.7,890.1 184.0,902.1 185.3,904.9 186.6,893.5 187.9,889.0 189.2,888.8 190.5,902.8 191.8,890.9 193.1,906.5 194.5,906.9 195.8,907.7 197.1,895.7 198.4,899.6 199.7,905.8 201.0,898.1 202.3,906.2 203.6,903.1 205.0,900.7 206.3,902.5 207.6,906.9 208.9,910.0 210.2,889.1 211.5,914.0 212.8,897.3 214.1,904.0 215.4,904.5 216.8,914.4 218.1,900.4 219.4,902.4 220.7,888.0 222.0,900.0 223.3,907.2 224.6,909.6 225.9,890.4 227.2,890.1 228.6,898.4 229.9,881.7 231.2,891.1 232.5,898.1 233.8,892.1 235.1,905.7 236.4,897.4 237.7,907.1 239.1,893.3 240.4,890.1 241.7,896.2 243.0,886.6 244.3,901.0 245.6,892.5 246.9,896.8 248.2,907.1 249.5,892.3 250.9,880.1 252.2,873.0 253.5,889.3 254.8,890.7 256.1,879.7 257.4,902.8 258.7,883.9 260.0,909.2 261.3,909.6 262.7,901.2 264.0,901.0 265.3,888.5 266.6,904.7 267.9,899.3 269.2,900.3 270.5,895.8 271.8,890.7 273.2,886.8 274.5,891.6 275.8,892.0 277.1,895.1 278.4,910.5 279.7,916.0 281.0,897.1 282.3,909.3 283.6,906.3 285.0,896.5 286.3,899.7 287.6,904.5 288.9,906.4 290.2,898.1 291.5,883.4 292.8,909.4 294.1,901.3 295.4,888.7 296.8,892.5 298.1,901.2 299.4,897.1 300.7,892.9 302.0,886.5 303.3,909.1 304.6,906.9 305.9,896.1 307.3,892.4 308.6,893.5 309.9,892.1 311.2,887.5 312.5,890.5 313.8,873.0 315.1,897.7 316.4,900.0 317.7,910.5 319.1,893.8 320.4,893.8 321.7,897.4 323.0,907.2 324.3,880.6 325.6,889.5 326.9,887.5 328.2,907.0 329.5,895.5 330.9,891.7 332.2,879.7 333.5,887.8 334.8,884.9 336.1,908.4 337.4,900.8 338.7,896.6 340.0,897.4 341.4,899.3 342.7,899.9 344.0,885.2 345.3,898.1 346.6,890.0 347.9,888.8 349.2,898.2 350.5,895.5 351.8,918.1 353.2,906.4 354.5,888.4 355.8,900.7 357.1,916.2 358.4,891.5 359.7,907.4 361.0,886.3 362.3,894.8 363.6,908.1 365.0,905.1 366.3,883.9 367.6,892.3 368.9,896.4 370.2,895.0 371.5,897.8 372.8,902.7 374.1,892.0 375.5,882.2 376.8,892.8 378.1,881.2 379.4,883.3 380.7,907.8 382.0,892.3 383.3,883.4 384.6,912.4 385.9,904.9 387.3,894.0 388.6,904.2 389.9,898.2 391.2,900.1 392.5,906.3 393.8,900.4 395.1,901.9 396.4,899.0 397.7,898.3 399.1,904.2 400.4,906.5 401.7,905.3 403.0,894.9 404.3,906.7 405.6,887.4 406.9,904.1 408.2,881.8 409.6,896.9 410.9,901.9 412.2,903.6 413.5,894.7 414.8,895.7 416.1,905.7 417.4,897.7 418.7,893.3 420.0,894.9 421.4,885.1 422.7,917.8 424.0,903.5 425.3,904.4 426.6,894.5 427.9,879.0 429.2,906.2 430.5,906.6 431.8,901.1 433.2,889.1 434.5,885.8 435.8,901.2 437.1,889.8 438.4,895.9 439.7,887.1 441.0,893.9 442.3,891.0 443.7,895.2 445.0,904.2 446.3,906.6 447.6,894.0 448.9,902.5 450.2,906.8 451.5,900.5 452.8,893.0 454.1,889.8 455.5,901.5 456.8,898.9 458.1,891.8 459.4,901.4 460.7,888.6 462.0,893.4 463.3,905.0 464.6,892.4 465.9,898.3 467.3,882.4 468.6,895.0 469.9,882.2 471.2,873.0 472.5,886.2 473.8,889.4 475.1,898.2 476.4,895.4 477.8,888.6 479.1,876.2 480.4,880.8 481.7,900.4 483.0,885.2' fill='none' stroke='#0c7d0c' stroke-width='1.45' stroke-linejoin='round'/>
<line x1='482.9' x2='482.9' y1='870' y2='923' stroke='#2f4a4c' stroke-width='1.8' stroke-dasharray='9 3'/>
<rect x='50.7' y='867.7' width='433.1' height='57.6' fill='none' stroke='#0c0c0c' stroke-width='1.8'/>
<path d='M50.7 926v7.5M483.8 926v7.5' stroke='#0c0c0c' stroke-width='1.3'/>
<line x1='44' x2='50' y1='867.8' y2='867.8' stroke='#0f800f' stroke-width='1.5'/>
<line x1='44' x2='50' y1='896.5' y2='896.5' stroke='#0f800f' stroke-width='1.5'/>
<line x1='44' x2='50' y1='923.8' y2='923.8' stroke='#0f800f' stroke-width='1.5'/>
<text x='41.6' y='888.6' text-anchor='end' font-family='Liberation Sans, sans-serif' font-size='15.6' fill='#0f800f' textLength='26.6' lengthAdjust='spacingAndGlyphs'>920</text>
<text x='41.6' y='902.0' text-anchor='end' font-family='Liberation Sans, sans-serif' font-size='15.6' fill='#0f800f' textLength='26.6' lengthAdjust='spacingAndGlyphs'>919</text>
<text x='41.6' y='915.8' text-anchor='end' font-family='Liberation Sans, sans-serif' font-size='15.6' fill='#0f800f' textLength='26.6' lengthAdjust='spacingAndGlyphs'>919</text>
</svg>
<span class='t ' style='left:52.50px;top:940.15px;font-size:16.6px;letter-spacing:-0.05px'>9/30/2025 09:58:13</span>
<div class='abs' style='left:407px;top:927.5px;width:77.5px;height:29px;border:1px solid #d2d2d2;border-radius:15px;background:#fff'></div>
<span class='t ' style='left:419.20px;top:936.45px;font-size:16.6px;letter-spacing:-0.9px'>10:28:1</span>
<div class='vs' style='left:492px;top:507px;width:5.5px;height:458px;background:#fdfdfd;border-right:1.5px solid #b2b2b2;border-bottom:1px solid #8c8c8c'></div>
<div class='pb' style='left:503px;top:513px;width:562px;height:446px;background:#f0f1f2;border-bottom:1px solid #e1e4e9'></div>
<div class='abs' style='left:505px;top:550px;width:558px;height:407.5px;background:#fff'></div>
<div class='hd' style='left:503px;top:513px;width:562px;height:37px'></div>
<span class='t ttl' style='left:512.60px;top:525.13px;font-size:16.75px;letter-spacing:0.2px'>Cleaning Order Info</span>
<h1 class='t ' style='left:536.00px;top:555.32px;font-size:23.6px;font-weight:bold;color:#1e1e1e;letter-spacing:-0.05px'>Pipeline Cleaning Order #3267</h1>
<i class='abs' style='left:517.6px;top:612.6px;width:4.8px;height:4.8px;border-radius:50%;background:#1f5f9e'></i>
<p class='t doc' style='left:534.30px;top:607.40px;font-size:17.6px;letter-spacing:0.215px'><b>Segment</b>: Whirlpool Station 1 to Magellanic Compression Station</p>
<i class='abs' style='left:517.6px;top:648.9px;width:4.8px;height:4.8px;border-radius:50%;background:#1f5f9e'></i>
<p class='t doc' style='left:534.30px;top:643.70px;font-size:17.6px;letter-spacing:0.2px'><b>Responsible Staff</b>:</p>
<i class='abs' style='left:545.6px;top:685.3px;width:4.8px;height:4.8px;border-radius:50%;background:#111'></i>
<p class='t doc' style='left:562.00px;top:680.10px;font-size:17.6px;letter-spacing:0.14px'>Name: Abel Padilla</p>
<i class='abs' style='left:545.6px;top:721.6px;width:4.8px;height:4.8px;border-radius:50%;background:#111'></i>
<p class='t doc' style='left:562.00px;top:716.40px;font-size:17.6px;letter-spacing:0.32px'>Department: Operations</p>
<i class='abs' style='left:545.6px;top:757.5px;width:4.8px;height:4.8px;border-radius:50%;background:#111'></i>
<p class='t doc' style='left:562.00px;top:752.30px;font-size:17.6px;letter-spacing:-0.03px'>Radio #: 5689</p>
<i class='abs' style='left:517.6px;top:794.3px;width:4.8px;height:4.8px;border-radius:50%;background:#1f5f9e'></i>
<p class='t doc' style='left:534.30px;top:789.10px;font-size:17.6px;letter-spacing:0.15px'><b>Estimated Start Time</b>: 9/29/2025 15:00 hrs.</p>
<i class='abs' style='left:517.6px;top:830.6px;width:4.8px;height:4.8px;border-radius:50%;background:#1f5f9e'></i>
<p class='t doc' style='left:534.30px;top:825.40px;font-size:17.6px;letter-spacing:0.14px'><b>Estimated End Time:</b> 9/29/2025 17:00 hrs.</p>
<i class='abs' style='left:517.6px;top:867.0px;width:4.8px;height:4.8px;border-radius:50%;background:#1f5f9e'></i>
<p class='t doc' style='left:534.30px;top:861.80px;font-size:17.6px;letter-spacing:0.2px'><b>Pig type</b>:</p>
<i class='abs' style='left:545.6px;top:903.3px;width:4.8px;height:4.8px;border-radius:50%;background:#111'></i>
<p class='t doc' style='left:562.00px;top:898.10px;font-size:17.6px;letter-spacing:-0.17px'>Type: Scraper</p>
<i class='abs' style='left:545.6px;top:939.3px;width:4.8px;height:4.8px;border-radius:50%;background:#111'></i>
<p class='t doc' style='left:562.00px;top:934.10px;font-size:17.6px;letter-spacing:-0.19px'>Avg. Speed: 25 Mph</p>
<div class='vs' style='left:1071px;top:507px;width:5.5px;height:458px;background:#fdfdfd;border-right:1.5px solid #b2b2b2;border-bottom:1px solid #8c8c8c'></div>
<div class='pb' style='left:1082px;top:513px;width:451px;height:446px;background:#f1f1f1;border-bottom:1px solid #e1e4e9;border-left:1px solid #e9eaec;border-right:1px solid #e9eaec'></div>
<div class='hd' style='left:1082px;top:513px;width:451px;height:36px'></div>
<span class='t ttl' style='left:1091.30px;top:525.13px;font-size:16.75px;'>Video Feed</span>
<svg class='abs' style='left:1084px;top:590px' width='447' height='326' viewBox='1084 590 447 326'>
<defs>
<linearGradient id='vsky' x1='1084' y1='0' x2='1531' y2='0' gradientUnits='userSpaceOnUse'><stop offset='0' stop-color='#c6b39b'/><stop offset='.2' stop-color='#dac8ab'/><stop offset='.42' stop-color='#f1e2c4'/><stop offset='.6' stop-color='#fff6e0'/><stop offset='.85' stop-color='#fbebd0'/><stop offset='1' stop-color='#f0d8bc'/></linearGradient>
<linearGradient id='vskyv' x1='0' y1='590' x2='0' y2='676' gradientUnits='userSpaceOnUse'><stop offset='0' stop-color='#8a7466' stop-opacity='.2'/><stop offset='.45' stop-color='#b09c84' stop-opacity='.04'/><stop offset='1' stop-color='#fff2d2' stop-opacity='.25'/></linearGradient>
<radialGradient id='vsun' cx='1384' cy='642' r='200' gradientUnits='userSpaceOnUse'><stop offset='0' stop-color='#fffef6'/><stop offset='.35' stop-color='#fff8e4' stop-opacity='.95'/><stop offset='.7' stop-color='#fdf0d2' stop-opacity='.5'/><stop offset='1' stop-color='#fbeccc' stop-opacity='0'/></radialGradient>
<radialGradient id='vsunc' cx='1384' cy='641' r='78' gradientUnits='userSpaceOnUse'><stop offset='0' stop-color='#ffffff'/><stop offset='.35' stop-color='#fffdf0' stop-opacity='.85'/><stop offset='1' stop-color='#fff6dc' stop-opacity='0'/></radialGradient>
<radialGradient id='vcloud' cx='1531' cy='592' r='30' gradientUnits='userSpaceOnUse'><stop offset='0' stop-color='#a48c7e' stop-opacity='.9'/><stop offset='.5' stop-color='#c4aa96' stop-opacity='.55'/><stop offset='1' stop-color='#e8d0b8' stop-opacity='0'/></radialGradient>
<linearGradient id='vfar' x1='1084' y1='0' x2='1531' y2='0' gradientUnits='userSpaceOnUse'><stop offset='0' stop-color='#515f2c'/><stop offset='.35' stop-color='#6e7b3a'/><stop offset='.65' stop-color='#c2b368'/><stop offset='1' stop-color='#a79b58'/></linearGradient>
<linearGradient id='vbgp' x1='0' y1='684' x2='0' y2='696' gradientUnits='userSpaceOnUse'><stop offset='0' stop-color='#55575a'/><stop offset='.22' stop-color='#7b7a78'/><stop offset='.42' stop-color='#3a3d42'/><stop offset='1' stop-color='#1c1e20'/></linearGradient>
<linearGradient id='vbgp2' x1='0' y1='684' x2='0' y2='696' gradientUnits='userSpaceOnUse'><stop offset='0' stop-color='#4b423c'/><stop offset='.28' stop-color='#c9b8a4'/><stop offset='.5' stop-color='#6a5a4c'/><stop offset='1' stop-color='#574a3c'/></linearGradient>
<linearGradient id='vgr' x1='0' y1='695' x2='0' y2='916' gradientUnits='userSpaceOnUse'><stop offset='0' stop-color='#8b9246'/><stop offset='.18' stop-color='#7d883a'/><stop offset='.5' stop-color='#5a6626'/><stop offset='.8' stop-color='#333b15'/><stop offset='1' stop-color='#1d240b'/></linearGradient>
<linearGradient id='vgl' x1='1084' y1='0' x2='1330' y2='0' gradientUnits='userSpaceOnUse'><stop offset='0' stop-color='#2c5016' stop-opacity='.45'/><stop offset='1' stop-color='#2f4c18' stop-opacity='0'/></linearGradient>
<radialGradient id='vgw' cx='1445' cy='735' r='235' gradientUnits='userSpaceOnUse' gradientTransform='translate(1445 735) scale(1 .72) translate(-1445 -735)'><stop offset='0' stop-color='#c39c48' stop-opacity='.9'/><stop offset='.5' stop-color='#a4863a' stop-opacity='.55'/><stop offset='1' stop-color='#857830' stop-opacity='0'/></radialGradient>
<radialGradient id='vgd' cx='1531' cy='916' r='170' gradientUnits='userSpaceOnUse'><stop offset='0' stop-color='#060803' stop-opacity='.95'/><stop offset='.55' stop-color='#141a08' stop-opacity='.5'/><stop offset='1' stop-color='#1c240c' stop-opacity='0'/></radialGradient>
<linearGradient id='vpipe' x1='1228' y1='742' x2='1296' y2='880' gradientUnits='userSpaceOnUse'><stop offset='0' stop-color='#d9d3c2'/><stop offset='.07' stop-color='#a9a89c'/><stop offset='.2' stop-color='#565c5e'/><stop offset='.33' stop-color='#3a4146'/><stop offset='.44' stop-color='#6f6d60'/><stop offset='.52' stop-color='#2d3338'/><stop offset='.72' stop-color='#15191d'/><stop offset='1' stop-color='#07090b'/></linearGradient>
<linearGradient id='vpfar' x1='1304' y1='0' x2='1430' y2='0' gradientUnits='userSpaceOnUse'><stop offset='0' stop-color='#fff6de' stop-opacity='0'/><stop offset='.45' stop-color='#fff3d6' stop-opacity='.5'/><stop offset='1' stop-color='#fff0cc' stop-opacity='.95'/></linearGradient>
<linearGradient id='vptop' x1='1150' y1='0' x2='1400' y2='0' gradientUnits='userSpaceOnUse'><stop offset='0' stop-color='#d9d4c4' stop-opacity='0'/><stop offset='.25' stop-color='#dcd6c6' stop-opacity='.6'/><stop offset='.6' stop-color='#efe8d6' stop-opacity='.88'/><stop offset='1' stop-color='#fff4dc' stop-opacity='.95'/></linearGradient>
<radialGradient id='vsun2' cx='1392' cy='682' r='150' gradientUnits='userSpaceOnUse' gradientTransform='translate(1392 682) scale(1 .45) translate(-1392 -682)'><stop offset='0' stop-color='#fff4d2' stop-opacity='.85'/><stop offset='.5' stop-color='#f8e2b0' stop-opacity='.4'/><stop offset='1' stop-color='#e8c888' stop-opacity='0'/></radialGradient>
<filter id='vb05' x='-20%' y='-20%' width='140%' height='140%'><feGaussianBlur stdDeviation='.7'/></filter>
<filter id='vbt' x='-20%' y='-20%' width='140%' height='140%'><feGaussianBlur stdDeviation='1.5'/></filter>
<filter id='vb1' x='-20%' y='-20%' width='140%' height='140%'><feGaussianBlur stdDeviation='1.2'/></filter>
<filter id='vb2' x='-20%' y='-20%' width='140%' height='140%'><feGaussianBlur stdDeviation='2.5'/></filter>
<filter id='vb6' x='-30%' y='-30%' width='160%' height='160%'><feGaussianBlur stdDeviation='7'/></filter>
<filter id='vgrass' x='0' y='0' width='100%' height='100%'><feTurbulence type='fractalNoise' baseFrequency='0.2 0.03' numOctaves='3' seed='4' result='n'/><feColorMatrix in='n' type='matrix' values='0 0 0 0 .62  0 0 0 0 .66  0 0 0 0 .22  1.9 0 0 0 -.78'/></filter>
<filter id='vgrassd' x='0' y='0' width='100%' height='100%'><feTurbulence type='fractalNoise' baseFrequency='0.16 0.026' numOctaves='3' seed='11' result='n'/><feColorMatrix in='n' type='matrix' values='0 0 0 0 .06  0 0 0 0 .1  0 0 0 0 .02  0 1.9 0 0 -.8'/></filter>
<clipPath id='vclip'><rect x='1084' y='590' width='447' height='326'/></clipPath>
</defs>
<g clip-path='url(#vclip)'>
<rect x='1084' y='590' width='447' height='90' fill='url(#vsky)'/>
<rect x='1084' y='590' width='447' height='90' fill='url(#vskyv)'/>
<rect x='1084' y='590' width='447' height='90' fill='url(#vsun)'/>
<rect x='1470' y='590' width='61' height='50' fill='url(#vcloud)'/>
<g filter='url(#vbt)' fill='#3e4a33'><ellipse cx='1128' cy='660' rx='10.5' ry='16'/><ellipse cx='1120' cy='653' rx='4.5' ry='13'/><ellipse cx='1131' cy='649' rx='5' ry='10'/><ellipse cx='1125' cy='668' rx='9' ry='7'/><ellipse cx='1159.5' cy='661' rx='8' ry='13.5'/><ellipse cx='1187.5' cy='662.5' rx='5.5' ry='11.5'/><ellipse cx='1205.5' cy='665' rx='5.2' ry='9'/><rect x='1150.4' y='629' width='1.6' height='46' fill='#6d6a58'/><rect x='1219' y='642' width='1.3' height='33' fill='#a09a84'/><rect x='1257' y='659' width='1' height='16' fill='#c0b79e'/></g>
<path d='M1422 675l6-5 10-2 8-3 20-1 30 .5 35-.5v12h-109z' fill='#68684a' opacity='.85' filter='url(#vb1)'/>
<rect x='1084' y='674.5' width='447' height='11' fill='url(#vfar)'/>
<rect x='1084' y='672.5' width='447' height='5' fill='#8f9556' opacity='.45' filter='url(#vb1)'/>
<rect x='1084' y='694' width='447' height='222' fill='url(#vgr)'/>
<rect x='1084' y='694' width='447' height='222' fill='url(#vgl)'/>
<rect x='1084' y='694' width='447' height='222' fill='url(#vgw)'/>
<rect x='1084' y='694' width='447' height='222' filter='url(#vgrass)' opacity='.38'/>
<rect x='1084' y='694' width='447' height='222' filter='url(#vgrassd)' opacity='.6'/>
<rect x='1084' y='694' width='447' height='222' fill='url(#vgd)'/>
<ellipse cx='1440' cy='775' rx='45' ry='12' fill='#3c3a14' opacity='.5' filter='url(#vb6)'/>
<ellipse cx='1120' cy='745' rx='50' ry='14' fill='#233a12' opacity='.55' filter='url(#vb6)'/>
<rect x='1084' y='684.3' width='447' height='11.6' fill='url(#vbgp)'/>
<rect x='1432' y='684.3' width='99' height='11.6' fill='url(#vbgp2)'/>
<rect x='1330' y='684.3' width='100' height='11.6' fill='#e8cfa8' opacity='.35'/>
<ellipse cx='1384' cy='688' rx='6' ry='2' fill='#fff6dc' filter='url(#vb1)'/>
<rect x='1084' y='695.5' width='447' height='2.5' fill='#2c3218' opacity='.55' filter='url(#vb1)'/>
<rect x='1184' y='600' width='347' height='170' fill='url(#vsun2)'/>
<rect x='1290' y='590' width='190' height='135' fill='url(#vsunc)'/>
<path d='M1425 694L1335 778 1262 880 1236 916H1084V800z' fill='#0a0d06' opacity='.78' filter='url(#vb6)'/>
<g filter='url(#vb1)'><rect x='1279' y='800' width='16.5' height='56' fill='#565b60'/><rect x='1279' y='800' width='5' height='56' fill='#7c8186' opacity='.6'/><rect x='1213' y='838' width='68' height='19' rx='3' fill='#3a393b'/><rect x='1216' y='838.5' width='64' height='4' fill='#7c7470' opacity='.7'/><rect x='1296' y='796' width='24' height='9' rx='2' fill='#454446'/><rect x='1323' y='762' width='8' height='32' fill='#5b6068'/><rect x='1352' y='738' width='7' height='24' fill='#7a7c80'/><rect x='1378' y='722' width='5' height='17' fill='#8e8a84'/><rect x='1394' y='712' width='4' height='12' fill='#a09a90'/></g>
<g filter='url(#vb1)'>
<path d='M1429.5 688.0L1084.0 785.5L1084.0 791.9z' fill='#cec9b9'/>
<path d='M1429.5 688.0L1084.0 789.8L1084.0 796.2z' fill='#b1afa2'/>
<path d='M1429.5 688.0L1084.0 794.1L1084.0 800.5z' fill='#92948d'/>
<path d='M1429.5 688.0L1084.0 798.4L1084.0 804.8z' fill='#787c7a'/>
<path d='M1429.5 688.0L1084.0 802.8L1084.0 809.1z' fill='#676d6d'/>
<path d='M1429.5 688.0L1084.0 807.1L1084.0 813.4z' fill='#575e60'/>
<path d='M1429.5 688.0L1084.0 811.4L1084.0 817.8z' fill='#4e5559'/>
<path d='M1429.5 688.0L1084.0 815.7L1084.0 822.1z' fill='#464e53'/>
<path d='M1429.5 688.0L1084.0 820.0L1084.0 826.4z' fill='#3e464c'/>
<path d='M1429.5 688.0L1084.0 824.3L1084.0 830.7z' fill='#3d444a'/>
<path d='M1429.5 688.0L1084.0 828.6L1084.0 835.0z' fill='#3e4549'/>
<path d='M1429.5 688.0L1084.0 832.9L1084.0 839.3z' fill='#3f4548'/>
<path d='M1429.5 688.0L1084.0 837.2L1084.0 843.6z' fill='#454a4a'/>
<path d='M1429.5 688.0L1084.0 841.6L1084.0 847.9z' fill='#51534d'/>
<path d='M1429.5 688.0L1084.0 845.9L1084.0 852.3z' fill='#5c5b50'/>
<path d='M1429.5 688.0L1084.0 850.2L1084.0 856.6z' fill='#58574d'/>
<path d='M1429.5 688.0L1084.0 854.5L1084.0 860.9z' fill='#535349'/>
<path d='M1429.5 688.0L1084.0 858.8L1084.0 865.2z' fill='#444643'/>
<path d='M1429.5 688.0L1084.0 863.1L1084.0 869.5z' fill='#353a3c'/>
<path d='M1429.5 688.0L1084.0 867.4L1084.0 873.8z' fill='#2d3337'/>
<path d='M1429.5 688.0L1084.0 871.8L1084.0 878.1z' fill='#282e32'/>
<path d='M1429.5 688.0L1084.0 876.1L1084.0 882.4z' fill='#24292e'/>
<path d='M1429.5 688.0L1084.0 880.4L1084.0 886.8z' fill='#20252a'/>
<path d='M1429.5 688.0L1084.0 884.7L1084.0 891.1z' fill='#1d2227'/>
<path d='M1429.5 688.0L1084.0 889.0L1084.0 895.4z' fill='#1b1f24'/>
<path d='M1429.5 688.0L1084.0 893.3L1084.0 899.7z' fill='#181d21'/>
<path d='M1429.5 688.0L1084.0 897.6L1084.0 904.0z' fill='#161a1e'/>
<path d='M1429.5 688.0L1084.0 901.9L1084.0 908.3z' fill='#14171b'/>
<path d='M1429.5 688.0L1084.0 906.2L1084.0 912.6z' fill='#121519'/>
<path d='M1429.5 688.0L1084.0 910.6L1084.0 916.0L1084.9 916.0z' fill='#101317'/>
<path d='M1429.5 688.0L1084.0 914.9L1084.0 916.0L1089.3 916.0z' fill='#0f1215'/>
<path d='M1429.5 688.0L1087.2 916.0L1093.6 916.0z' fill='#0d1013'/>
<path d='M1429.5 688.0L1091.5 916.0L1097.9 916.0z' fill='#0b0e11'/>
<path d='M1429.5 688.0L1095.8 916.0L1102.2 916.0z' fill='#0a0c0f'/>
<path d='M1429.5 688.0L1100.1 916.0L1106.5 916.0z' fill='#0a0b0e'/>
<path d='M1429.5 688.0L1104.4 916.0L1110.8 916.0z' fill='#090a0d'/>
<path d='M1429.5 688.0L1108.8 916.0L1115.1 916.0z' fill='#08090b'/>
<path d='M1429.5 688.0L1113.1 916.0L1119.4 916.0z' fill='#07080a'/>
<path d='M1429.5 688.0L1117.4 916.0L1123.8 916.0z' fill='#060709'/>
<path d='M1429.5 688.0L1121.7 916.0L1126.0 916.0z' fill='#050608'/>
</g>
<path d='M1429.5 686L1296 724.5 1308 778 1430 691.5z' fill='url(#vpfar)' filter='url(#vb1)'/>
<path d='M1429.5 686.3L1150 767 1150 809 1429.5 689.6z' fill='url(#vptop)' filter='url(#vb2)'/>
<g fill='none' stroke-linecap='round' filter='url(#vb05)'><path d='M1252 731C1272 723 1296 729 1302 779' stroke='#4a4240' stroke-width='5'/><path d='M1302 716.5C1318 710 1338 716 1342 749' stroke='#5a4e48' stroke-width='3.8'/><path d='M1343 705.5C1355 701 1369 706 1372 728' stroke='#7a6c60' stroke-width='2.8'/><path d='M1374 698C1383 695 1392 699 1394 714' stroke='#a08c78' stroke-width='2.1'/><path d='M1396 693.5C1402 692 1408 694 1409.5 705' stroke='#c0a888' stroke-width='1.5'/></g>
<path d='M1429 686L1084 785.5' stroke='#cfc9b8' stroke-width='3' opacity='.55' filter='url(#vb2)' fill='none'/>
<path d='M1084 840L1250 772' stroke='#8f8a74' stroke-width='12' opacity='.35' filter='url(#vb6)' fill='none'/>
<g stroke='#93a53e' stroke-width='2.2' opacity='.55' filter='url(#vb1)' fill='none'><path d='M1310 916c2-40 8-70 12-92M1330 916c0-30 4-58 10-80M1352 916c-2-34 2-60 9-86M1380 916c1-28 5-52 12-74M1404 916c-1-30 3-50 8-70M1296 916c3-22 8-42 14-58M1436 916c0-26 2-44 7-62M1460 916c1-20 4-36 8-50'/></g>
<path d='M1466 914l2.5-16 2.5 16z' fill='#d0622a' opacity='.8' filter='url(#vb1)'/>
<rect x='1084' y='590' width='447' height='1.2' fill='#3b3c46'/>
<text x='1456.8' y='910' font-family='Liberation Sans, sans-serif' font-size='11.6' fill='#1a1a1a' opacity='.45' textLength='69.5' lengthAdjust='spacingAndGlyphs' transform='translate(.7 .7)'>gasoutlook.com</text>
<text x='1456.8' y='910' font-family='Liberation Sans, sans-serif' font-size='11.6' fill='#d4d4d2' opacity='.85' textLength='69.5' lengthAdjust='spacingAndGlyphs'>gasoutlook.com</text>
</g></svg>
<div class='vs' style='left:1538px;top:507px;width:5.5px;height:458px;background:#deded9;border-bottom:1px solid #8c8c8c'></div>
<div class='pb' style='left:1550px;top:513px;width:364px;height:446px'></div>
<div class='hd' style='left:1550px;top:513px;width:364px;height:36px'></div>
<span class='t ttl' style='left:1559.30px;top:525.13px;font-size:16.75px;'>Pipeline Location</span>
<svg class='abs' style='left:1551px;top:549px' width='362' height='409' viewBox='1551 549 362 409'>
<defs><filter id='mb' x='-5%' y='-5%' width='110%' height='110%'><feGaussianBlur stdDeviation='.45'/></filter><clipPath id='mclip'><rect x='1551' y='549' width='362' height='409'/></clipPath></defs>
<g clip-path='url(#mclip)'>
<rect x='1551' y='549' width='362' height='409' fill='#f2efe9'/>
<g filter='url(#mb)'>
<path d='M1548.0 545.0L1600.4 545.0L1592.8 560.3L1594.9 573.4L1600.4 584.3L1611.3 596.3L1605.2 608.3L1607.4 619.2L1602.6 632.3L1605.8 637.8L1618.9 638.9L1618.9 658.5L1613.5 671.6L1610.2 684.7L1606.9 685.8L1591.7 684.7L1585.1 688.0L1576.4 683.6L1567.6 679.3L1558.9 686.5L1548.0 684.7z' fill='#bfdbb3'/>
<path d='M1552.4 561.4L1561.1 565.7L1574.2 570.1L1580.7 572.3' stroke='#e6efe0' stroke-width='1' fill='none'/>
<path d='M1593.8 586.5L1599.3 586.9L1600.0 591.9L1594.3 591.9z' fill='#eef0e6'/>
<path d='M1743.4 545.0L1742.9 702.6L1683.3 702.6L1683.3 760.0' stroke='#a6d19e' stroke-opacity='.75' fill='none' stroke-width='3.6'/>
<path d='M1548.0 759.2L1683.3 761.4L1683.3 750.0' stroke='#a6d19e' stroke-opacity='.75' fill='none' stroke-width='3'/>
<path d='M1781.6 545.0L1783.3 573.4L1804.5 573.4L1804.5 558.5L1808.2 555.0L1805.1 545.0' stroke='#a6d19e' stroke-opacity='.75' fill='none' stroke-width='2.6'/>
<path d='M1548.0 874.9L1568.1 876.6L1568.1 898.4L1548.0 898.4' stroke='#a6d19e' stroke-opacity='.75' fill='none' stroke-width='2.6'/>
<path d='M1548.0 773.6L1557.8 774.4L1561.1 779.5L1556.7 783.2L1548.0 783.2' stroke='#a6d19e' stroke-opacity='.75' fill='none' stroke-width='2.2'/>
<path d='M1797.9 853.0L1808.9 853.0L1808.9 864.6L1797.9 864.6z' fill='#b8dab0' stroke='#a5cf9c' stroke-width='1.4'/>
<path d='M1724.8 563.6L1735.3 563.6' stroke='#a9a7a4' stroke-width='.8' fill='none'/>
<path d='M1724.8 563.6L1723.7 584.3L1739.0 591.9L1740.1 596.3L1733.5 605.0L1727.0 614.9L1721.5 641.0L1723.7 658.5L1733.5 667.2L1748.8 680.3L1752.1 695.6L1764.1 707.6L1765.2 732.7L1768.5 741.5L1772.8 760.0' stroke='#a9a7a4' stroke-width='.8' fill='none'/>
<path d='M1856.9 551.5L1853.6 564.6L1840.5 575.6L1829.6 584.3L1818.7 602.8L1795.8 603.9' stroke='#a9a7a4' stroke-width='.8' fill='none'/>
<path d='M1610.2 684.7L1610.2 672.7' stroke='#a9a7a4' stroke-width='.8' fill='none'/>
<path d='M1670.2 759.4L1687.7 754.6L1713.9 749.1L1727.0 750.2' stroke='#a9a7a4' stroke-width='.8' fill='none'/>
<path d='M1548.0 778.4L1561.1 776.2L1576.4 779.5L1591.7 778.4L1611.3 777.3L1635.3 774.0L1644.0 766.4L1665.9 762.0L1683.3 755.5L1713.9 750.0' stroke='#a9a7a4' stroke-width='.8' fill='none'/>
<path d='M1576.4 779.5L1580.7 800.2L1582.9 808.9L1574.2 824.2L1578.6 843.9L1568.7 852.6L1565.5 863.5L1548.0 866.8' stroke='#a9a7a4' stroke-width='.8' fill='none'/>
<path d='M1665.9 762.0L1665.9 787.1L1651.7 804.6L1645.1 819.9L1645.1 827.5L1635.3 828.1' stroke='#a9a7a4' stroke-width='.8' fill='none'/>
<path d='M1720.5 758.7L1727.0 769.6L1722.6 782.7L1733.5 804.6L1735.7 830.8L1753.2 850.4L1753.2 885.3L1747.7 907.2L1746.6 957.4' stroke='#a9a7a4' stroke-width='.8' fill='none'/>
<path d='M1769.6 750.0L1772.8 763.1L1818.7 765.7L1858.0 765.7L1862.3 762.7L1871.1 766.4L1888.5 766.4L1913.0 756.5' stroke='#a9a7a4' stroke-width='.8' fill='none'/>
<path d='M1772.8 763.1L1766.3 771.8L1766.3 795.8L1775.0 803.5L1775.0 822.0' stroke='#a9a7a4' stroke-width='.8' fill='none'/>
<path d='M1818.7 765.7L1817.6 863.5L1812.1 878.8L1811.0 898.4L1820.9 912.6L1829.6 930.1L1842.7 935.5L1843.8 954.1L1914.7 955.2' stroke='#a9a7a4' stroke-width='.8' fill='none'/>
<path d='M1817.6 863.9L1844.9 863.9L1845.3 854.3L1884.2 853.7L1908.2 853.7L1914.7 848.2' stroke='#a9a7a4' stroke-width='.8' fill='none'/>
<path d='M1883.1 766.4L1881.6 853.7' stroke='#a9a7a4' stroke-width='.8' fill='none'/>
<path d='M1891.8 854.8L1890.7 872.2L1882.0 889.7L1881.6 897.3' stroke='#a9a7a4' stroke-width='.8' fill='none'/>
<path d='M1818.7 906.7L1913.0 908.5' stroke='#b5b3b0' stroke-width='1.6' fill='none' transform='translate(0 48)'/>
<path d='M1763.0 704.4L1769.6 703.9L1770.7 713.1L1776.1 717.5L1781.6 724.0L1783.8 730.5L1777.2 734.9L1768.5 733.2L1757.6 733.8L1756.5 729.5L1760.8 719.6z' fill='#d9d8d6'/>
<path d='M1806.7 725.7L1815.4 725.7L1815.4 728.8L1806.7 728.8z' fill='#d9d8d6'/>
<path d='M1665.9 545.0C1666.4 547.2 1669.3 553.7 1669.2 558.1C1669.0 562.5 1665.0 566.1 1664.8 571.2C1664.6 576.3 1666.8 584.3 1668.1 588.7C1669.3 593.0 1669.2 594.8 1672.4 597.4C1675.7 599.9 1683.3 601.8 1687.7 603.9C1692.1 606.1 1696.4 608.5 1698.6 610.5C1700.8 612.5 1698.3 614.1 1700.8 615.9C1703.4 617.8 1711.5 619.4 1713.9 621.4C1716.3 623.4 1716.4 624.3 1715.0 628.0C1713.5 631.6 1707.9 638.9 1705.2 643.2C1702.4 647.6 1699.7 651.6 1698.6 654.1C1697.5 656.7 1696.4 657.1 1698.6 658.5C1700.8 660.0 1707.7 660.0 1711.7 662.9C1715.7 665.8 1718.3 672.3 1722.6 676.0C1727.0 679.6 1734.6 681.8 1737.9 684.7C1741.2 687.6 1741.6 690.5 1742.3 693.4C1743.0 696.3 1743.6 699.3 1742.3 702.2C1741.0 705.1 1735.0 707.6 1734.6 710.9C1734.3 714.2 1737.0 718.0 1740.1 721.8C1743.2 725.6 1750.1 731.1 1753.2 733.8C1756.3 736.6 1759.0 736.2 1758.7 738.2C1758.3 740.2 1755.6 744.0 1751.0 745.8C1746.5 747.6 1734.3 747.3 1731.4 749.1C1728.5 750.9 1732.5 754.7 1733.5 756.7C1734.6 758.7 1737.2 760.4 1737.9 761.1' stroke='#aad3df' fill='none' stroke-linecap='round' stroke-linejoin='round' stroke-width='2.1'/>
<path d='M1731.4 750.0C1732.1 751.8 1735.4 756.5 1735.7 760.9C1736.1 765.3 1734.3 771.1 1733.5 776.2C1732.8 781.3 1730.3 786.7 1731.4 791.5C1732.5 796.2 1737.2 800.6 1740.1 804.6C1743.0 808.6 1746.8 811.1 1748.8 815.5C1750.8 819.9 1749.6 827.7 1752.1 830.8C1754.7 833.9 1759.9 832.6 1764.1 834.0C1768.3 835.5 1773.4 836.4 1777.2 839.5C1781.0 842.6 1785.6 849.3 1787.0 852.6C1788.5 855.9 1787.9 856.6 1785.9 859.1C1783.9 861.7 1776.7 865.5 1775.0 867.9C1773.4 870.2 1774.7 873.2 1776.1 873.3C1777.6 873.5 1781.8 868.1 1783.8 869.0C1785.8 869.9 1787.2 873.5 1788.1 878.8C1789.0 884.1 1787.0 896.8 1789.2 900.6C1791.4 904.4 1798.5 902.3 1801.2 901.7C1803.9 901.2 1804.1 897.2 1805.6 897.3C1807.0 897.5 1809.2 901.9 1810.0 902.8' stroke='#aad3df' fill='none' stroke-linecap='round' stroke-linejoin='round' stroke-width='2.1'/>
<path d='M1810.0 902.8C1811.0 904.3 1814.5 907.9 1816.5 911.5C1818.5 915.2 1821.6 920.3 1822.0 924.6C1822.3 929.0 1819.6 932.3 1818.7 937.7C1817.8 943.2 1816.9 954.1 1816.5 957.4' stroke='#8f8fc0' stroke-width='1.5' fill='none'/>
<path d='M1636.4 873.3C1637.7 875.0 1642.4 879.0 1644.0 883.2C1645.7 887.3 1646.8 893.7 1646.2 898.4C1645.7 903.2 1640.8 907.9 1640.8 911.5C1640.8 915.2 1642.8 917.7 1646.2 920.3C1649.7 922.8 1659.3 924.3 1661.5 926.8C1663.7 929.4 1662.2 932.6 1659.3 935.5C1656.4 938.5 1645.9 940.6 1644.0 944.3C1642.2 947.9 1647.7 955.2 1648.4 957.4' stroke='#aad3df' fill='none' stroke-linecap='round' stroke-linejoin='round' stroke-width='1.9'/>
<path d='M1913.0 822.0C1911.1 822.0 1904.3 819.5 1901.6 822.0C1899.0 824.6 1899.8 833.0 1897.3 837.3C1894.7 841.7 1888.2 843.9 1886.4 848.2C1884.5 852.6 1887.3 859.5 1886.4 863.5C1885.4 867.5 1881.6 869.7 1880.9 872.2C1880.2 874.8 1884.2 876.6 1882.0 878.8C1879.8 881.0 1870.0 881.7 1867.8 885.3C1865.6 889.0 1869.6 895.9 1868.9 900.6C1868.2 905.4 1863.8 908.6 1863.4 913.7C1863.1 918.8 1866.5 926.5 1866.7 931.2C1866.9 935.9 1864.2 937.7 1864.5 942.1C1864.9 946.5 1868.2 954.8 1868.9 957.4' stroke='#aad3df' fill='none' stroke-linecap='round' stroke-linejoin='round' stroke-width='2.8'/>
<path d='M1856.9 551.5C1858.0 552.5 1862.7 554.5 1863.4 557.0C1864.2 559.6 1861.1 562.6 1861.3 566.8C1861.4 571.0 1864.9 577.2 1864.5 582.1C1864.2 587.0 1858.7 593.4 1859.1 596.3C1859.4 599.2 1864.0 600.3 1866.7 599.6C1869.4 598.8 1872.7 592.7 1875.4 591.9C1878.2 591.2 1881.8 594.7 1883.1 595.2' stroke='#aad3df' fill='none' stroke-linecap='round' stroke-linejoin='round' stroke-width='1.7'/>
<path d='M1864.5 605.0C1865.3 605.9 1867.8 610.1 1868.9 610.5C1870.0 610.9 1870.7 607.8 1871.1 607.2' stroke='#aad3df' fill='none' stroke-linecap='round' stroke-linejoin='round' stroke-width='1.7'/>
<path d='M1902.7 607.2C1903.5 608.1 1905.4 612.1 1907.1 612.7C1908.8 613.2 1912.0 610.9 1913.0 610.5' stroke='#aad3df' fill='none' stroke-linecap='round' stroke-linejoin='round' stroke-width='1.7'/>
<path d='M1864.5 784.9C1864.7 785.8 1866.7 788.4 1865.6 790.4C1864.5 792.4 1860.0 796.8 1858.0 796.9C1856.0 797.1 1854.3 792.4 1853.6 791.5' stroke='#aad3df' fill='none' stroke-linecap='round' stroke-linejoin='round' stroke-width='1.4'/>
<path d='M1629.9 799.1L1628.3 807.2' stroke='#aad3df' fill='none' stroke-linecap='round' stroke-linejoin='round' stroke-width='2'/>
<path d='M1580.7 874.4L1587.3 882.1' stroke='#aad3df' fill='none' stroke-linecap='round' stroke-linejoin='round' stroke-width='2'/>
<path d='M1558.9 947.6L1564.4 954.1' stroke='#aad3df' fill='none' stroke-linecap='round' stroke-linejoin='round' stroke-width='2'/>
<path d='M1569.8 818.8L1572.4 820.9' stroke='#aad3df' fill='none' stroke-linecap='round' stroke-linejoin='round' stroke-width='2'/>
<path d='M1631.4 674.2L1633.1 676.4' stroke='#aad3df' fill='none' stroke-linecap='round' stroke-linejoin='round' stroke-width='2'/>
<path d='M1652.3 755.5L1654.5 759.8' stroke='#aad3df' fill='none' stroke-linecap='round' stroke-linejoin='round' stroke-width='2'/>
<path d='M1548.0 684.7C1549.8 685.0 1555.6 687.4 1558.9 686.5C1562.2 685.5 1564.7 679.7 1567.6 679.3C1570.6 678.8 1573.5 682.2 1576.4 683.6C1579.3 685.1 1582.6 687.8 1585.1 688.0C1587.7 688.2 1588.0 685.1 1591.7 684.7C1595.3 684.3 1601.7 684.2 1606.9 685.8C1612.2 687.4 1619.5 691.3 1623.3 694.5C1627.1 697.8 1627.9 703.4 1629.9 705.4C1631.9 707.5 1633.0 707.2 1635.3 707.0C1637.7 706.8 1640.8 705.4 1644.0 704.4C1647.3 703.3 1652.1 700.6 1655.0 700.4C1657.9 700.2 1658.6 702.9 1661.5 703.3C1664.4 703.6 1668.8 702.1 1672.4 702.6C1676.1 703.1 1680.1 706.4 1683.3 706.1C1686.6 705.8 1688.8 702.0 1692.1 701.1C1695.3 700.1 1699.3 699.5 1703.0 700.4C1706.6 701.3 1710.6 704.2 1713.9 706.5C1717.2 708.8 1719.9 710.5 1722.6 714.2C1725.4 717.8 1727.7 725.0 1730.3 728.4C1732.8 731.7 1736.6 733.5 1737.9 734.5' stroke='#f7bb6f' fill='none' stroke-linecap='round' stroke-linejoin='round' stroke-width='1.9'/>
<path d='M1737.9 734.5C1739.7 734.4 1745.6 735.2 1748.8 733.8C1752.1 732.4 1755.0 729.3 1757.6 726.2C1760.1 723.1 1761.2 718.9 1764.1 715.3C1767.0 711.6 1771.0 707.6 1775.0 704.4C1779.0 701.1 1784.8 697.3 1788.1 695.6C1791.4 694.0 1793.6 694.7 1794.7 694.5' stroke='#f7bb6f' fill='none' stroke-linecap='round' stroke-linejoin='round' stroke-width='1.9'/>
<path d='M1794.7 694.5L1823.5 694.5L1826.3 693.0L1838.3 681.4L1851.9 667.2L1855.8 665.5L1914.7 665.5' stroke='#f7bb6f' fill='none' stroke-linecap='round' stroke-linejoin='round' stroke-width='1.9'/>
<path d='M1772.8 545.0C1773.9 546.5 1777.9 548.6 1779.4 553.7C1780.8 558.8 1779.8 570.1 1781.6 575.6C1783.4 581.0 1787.8 579.9 1790.3 586.5C1792.9 593.0 1795.4 606.5 1796.9 614.9C1798.3 623.2 1798.7 625.8 1799.0 636.7C1799.4 647.6 1799.2 671.4 1799.0 680.3C1798.9 689.3 1798.9 687.8 1797.9 690.2C1797.0 692.5 1794.3 693.8 1793.6 694.5' stroke='#f7bb6f' fill='none' stroke-linecap='round' stroke-linejoin='round' stroke-width='1.9'/>
<path d='M1737.9 734.5C1737.6 736.0 1737.6 741.2 1735.7 743.6C1733.9 746.1 1730.3 746.4 1727.0 749.1C1723.7 751.8 1717.9 758.2 1716.1 760.0' stroke='#f7bb6f' fill='none' stroke-linecap='round' stroke-linejoin='round' stroke-width='1.9'/>
<path d='M1727.0 750.0C1725.2 751.5 1719.4 755.5 1716.1 758.7C1712.8 762.0 1708.8 765.6 1707.4 769.6C1705.9 773.6 1706.6 776.6 1707.4 782.7C1708.1 788.9 1711.4 800.9 1711.7 806.8C1712.1 812.6 1711.7 813.3 1709.5 817.7C1707.4 822.0 1702.3 827.5 1698.6 833.0C1695.0 838.4 1691.0 844.2 1687.7 850.4C1684.4 856.6 1682.3 864.2 1679.0 870.1C1675.7 875.9 1670.8 880.6 1668.1 885.3C1665.3 890.1 1663.9 893.9 1662.6 898.4C1661.3 903.0 1659.5 907.4 1660.4 912.6C1661.3 917.9 1667.7 925.2 1668.1 930.1C1668.4 935.0 1664.1 937.4 1662.6 942.1C1661.1 946.8 1659.9 955.7 1659.3 958.5' stroke='#f7bb6f' fill='none' stroke-linecap='round' stroke-linejoin='round' stroke-width='1.9'/>
<path d='M1551 898.0H1913' stroke='#cfaecd' stroke-width='2.3' fill='none'/>
<path d='M1551 898.0H1913' stroke='#b58fb6' stroke-width='.8' stroke-dasharray='6 3 1.5 3' fill='none'/>
</g>
<text x='1689.6' y='677.6' font-family='Liberation Sans, sans-serif' font-style='italic' font-size='14.2' fill='#f2efe9' stroke='#f2efe9' stroke-width='2.5' stroke-opacity='.8' textLength='84.5' lengthAdjust='spacingAndGlyphs'>Ripley County</text>
<text x='1689.6' y='677.6' font-family='Liberation Sans, sans-serif' font-style='italic' font-size='14.2' fill='#9b6a9c' textLength='84.5' lengthAdjust='spacingAndGlyphs'>Ripley County</text>
</g></svg>
</section>
</body></html>
